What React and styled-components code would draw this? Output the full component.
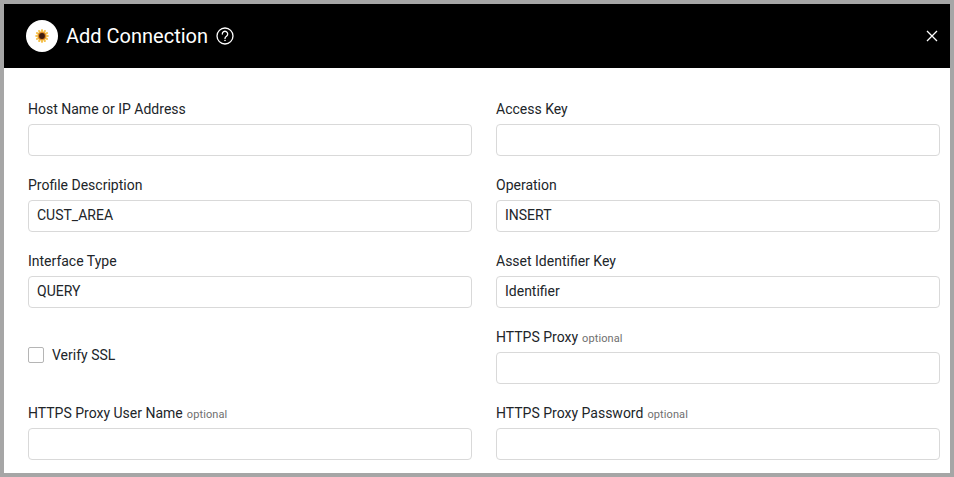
import React from "react";
import styled, { createGlobalStyle } from "styled-components";

const Global = createGlobalStyle`
  html, body { margin: 0; padding: 0; background: #a6a6a6; }
  * { box-sizing: border-box; }
`;

const Frame = styled.div`
  width: 954px;
  height: 477px;
  padding: 4px;
  background: #a6a6a6;
  font-family: Roboto, "Liberation Sans", sans-serif;
  overflow: hidden;
`;

const Dialog = styled.div`
  height: 469px;
  background: #fff;
  overflow: hidden;
`;

const Header = styled.header`
  height: 64px;
  background: #000;
  color: #fff;
  display: flex;
  align-items: center;
  padding: 0 11px 0 22px;
`;

const LogoBadge = styled.div`
  width: 32px;
  height: 32px;
  border-radius: 50%;
  background: #fff;
  display: flex;
  align-items: center;
  justify-content: center;
  margin-right: 8px;
`;

const Title = styled.h1`
  margin: 0 8px 0 0;
  font-size: 20px;
  font-weight: 400;
  line-height: 24px;
`;

const CloseButton = styled.button`
  margin-left: auto;
  width: 14px;
  height: 14px;
  padding: 0;
  border: 0;
  background: none;
  color: #fff;
  display: flex;
`;

const Form = styled.div`
  display: grid;
  grid-template-columns: 444px 444px;
  column-gap: 24px;
  padding: 31px 10px 0 24px;
`;

const Field = styled.div`
  height: 76px;
  display: flex;
  flex-direction: column;
`;

const Label = styled.label`
  font-size: 14px;
  line-height: 20px;
  height: 20px;
  color: #212529;
  margin-bottom: 5px;
`;

const Optional = styled.span`
  font-size: 11px;
  color: #6f6f6f;
  margin-left: 4px;
  letter-spacing: 0.1px;
`;

const Input = styled.input`
  height: 32px;
  width: 100%;
  border: 1px solid #d9d9d9;
  border-radius: 4px;
  padding: 0 8px 2px;
  background: #fff;
  outline: none;
  font: 400 14px Roboto, "Liberation Sans", sans-serif;
  color: #212529;
`;

const CheckField = styled.div`
  height: 76px;
  display: flex;
  align-items: center;
  gap: 8px;
  padding-bottom: 20px;
`;

const Box = styled.input.attrs({ type: "checkbox" })`
  appearance: none;
  width: 16px;
  height: 16px;
  margin: 0;
  border: 1px solid #b5b5b5;
  border-radius: 2px;
  background: #fff;
`;

const CheckLabel = styled.label`
  font-size: 14px;
  color: #212529;
`;

const Logo = () => (
  <svg width="14" height="14" viewBox="0 0 14 14">
    <g fill="#f5c04a">
      {Array.from({ length: 12 }, (_, i) => (
        <ellipse key={i} cx="7" cy="2" rx="1.1" ry="1.9" transform={`rotate(${i * 30} 7 7)`} />
      ))}
    </g>
    <circle cx="7" cy="7" r="4" fill="#d9801e" />
    <circle cx="7" cy="7" r="2.9" fill="#3f1d10" />
  </svg>
);

const Help = () => (
  <svg width="18" height="18" viewBox="0 0 18 18" fill="none" stroke="#fff" strokeWidth="1.3">
    <circle cx="9" cy="9" r="8" />
    <path d="M6.3 7a2.7 2.7 0 1 1 4.2 2.2c-1 .7-1.5 1.1-1.5 2.2" strokeLinecap="round" />
    <circle cx="9" cy="13.4" r=".5" fill="#fff" stroke="#fff" strokeWidth=".6" />
  </svg>
);

const Close = () => (
  <svg width="14" height="14" viewBox="0 0 14 14" stroke="#fff" strokeWidth="1.3">
    <path d="M2 2l10 10M12 2L2 12" />
  </svg>
);

const FieldBlock = ({ label, value = "", optional }) => (
  <Field>
    <Label>
      {label}
      {optional && <Optional>optional</Optional>}
    </Label>
    <Input defaultValue={value} />
  </Field>
);

export default function App() {
  return (
    <Frame>
      <Global />
      <Dialog>
        <Header>
          <LogoBadge><Logo /></LogoBadge>
          <Title>Add Connection</Title>
          <Help />
          <CloseButton aria-label="Close"><Close /></CloseButton>
        </Header>
        <Form>
          <FieldBlock label="Host Name or IP Address" />
          <FieldBlock label="Access Key" />
          <FieldBlock label="Profile Description" value="CUST_AREA" />
          <FieldBlock label="Operation" value="INSERT" />
          <FieldBlock label="Interface Type" value="QUERY" />
          <FieldBlock label="Asset Identifier Key" value="Identifier" />
          <CheckField>
            <Box id="ssl" />
            <CheckLabel htmlFor="ssl">Verify SSL</CheckLabel>
          </CheckField>
          <FieldBlock label="HTTPS Proxy" optional />
          <FieldBlock label="HTTPS Proxy User Name" optional />
          <FieldBlock label="HTTPS Proxy Password" optional />
        </Form>
      </Dialog>
    </Frame>
  );
}
